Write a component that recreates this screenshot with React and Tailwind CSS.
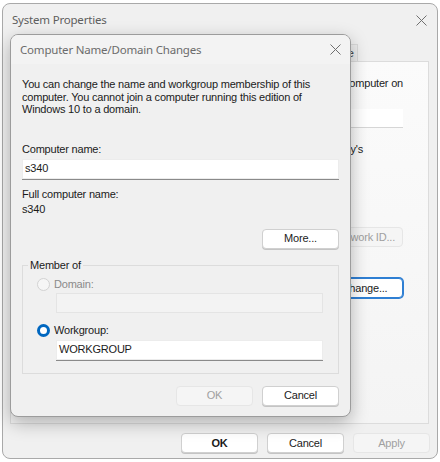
import React from "react";

const ui = { fontFamily: '"Liberation Sans", Arial, sans-serif', letterSpacing: "-0.2px" };
const title = { fontFamily: '"Noto Sans", "Open Sans", sans-serif', letterSpacing: "-0.2px" };

function CloseIcon({ className = "" }) {
  return (
    <svg width="11" height="11" viewBox="0 0 11 11" className={className}>
      <path d="M0.5 0.5 L10.5 10.5 M10.5 0.5 L0.5 10.5" stroke="currentColor" strokeWidth="1" fill="none" />
    </svg>
  );
}

function Button({ children, disabled, focused, className = "" }) {
  let look = "bg-white border-[#d0d0d0] text-[#1b1b1b] shadow-[0_1px_0_#c4c4c4]";
  if (disabled) look = "bg-[#f5f5f5] border-[#e6e6e6] text-[#a0a0a0]";
  if (focused) look = "bg-white border-[#2f7fd3] text-[#1b1b1b] ring-1 ring-[#2f7fd3]";
  return (
    <div className={`flex h-[20px] w-[77px] items-center justify-center rounded-[4px] border text-[11px] ${look} ${className}`}>
      {children}
    </div>
  );
}

function Radio({ checked, disabled }) {
  if (checked) {
    return <div className="h-[13px] w-[13px] rounded-full border-[3.5px] border-[#0067c0] bg-white" />;
  }
  return (
    <div
      className={`h-[13px] w-[13px] rounded-full border ${disabled ? "border-[#d2d2d2] bg-[#f6f6f6]" : "border-[#5a5a5a] bg-white"}`}
    />
  );
}

function TextBox({ value, disabled, className = "" }) {
  if (disabled) {
    return <div className={`h-[20px] border border-[#e4e4e4] bg-[#f3f3f3] ${className}`} />;
  }
  return (
    <div className={`flex h-[21px] items-center border-b border-b-[#8a8a8a] bg-white px-[3px] text-[11px] text-[#1b1b1b] shadow-[inset_0_0_0_1px_#ececec] ${className}`}>
      {value}
    </div>
  );
}

function ChangeDialog() {
  return (
    <div
      className="absolute left-[10px] top-[34px] flex h-[383px] w-[341px] flex-col overflow-hidden rounded-[8px] border border-[#9c9c9c] bg-[#f0f0f0] shadow-[0_6px_18px_rgba(0,0,0,0.28)]"
      style={ui}
    >
      <div className="flex h-[29px] shrink-0 items-center justify-between bg-[#f3f3f3] pl-[9px] pr-[9px]">
        <span className="text-[11.5px] text-[#6b6b6b]" style={title}>
          Computer Name/Domain Changes
        </span>
        <CloseIcon className="text-[#6f6f6f]" />
      </div>

      <div className="flex flex-1 flex-col px-[11px] pt-[14px] text-[11px] text-[#1b1b1b]">
        <p className="leading-[12.5px]">
          You can change the name and workgroup membership of this
          <br />
          computer. You cannot join a computer running this edition of
          <br />
          Windows 10 to a domain.
        </p>

        <div className="mt-[27px] leading-[13px]">Computer name:</div>
        <TextBox value="s340" className="mt-[3px]" />

        <div className="mt-[8px] leading-[13px]">Full computer name:</div>
        <div className="mt-[2px] leading-[13px]">s340</div>

        <div className="mt-[13px] flex justify-end">
          <Button>More...</Button>
        </div>

        <fieldset className="mt-[10px] border border-[#dcdcdc] px-[4px] pb-[12px]">
          <legend className="ml-[1px] px-[2px] leading-[13px]">Member of</legend>
          <div className="pl-[10px] pr-[11px]">
            <div className="mt-[6px] flex items-center gap-[4px] text-[#8a8a8a]">
              <Radio disabled />
              <span className="leading-[13px]">Domain:</span>
            </div>
            <TextBox disabled className="ml-[19px] mt-[2px]" />

            <div className="mt-[11px] flex items-center gap-[4px]">
              <Radio checked />
              <span className="leading-[13px]">Workgroup:</span>
            </div>
            <TextBox value="WORKGROUP" className="ml-[19px] mt-[3px]" />
          </div>
        </fieldset>

        <div className="mt-[12px] flex justify-end gap-[9px]">
          <Button disabled>OK</Button>
          <Button>Cancel</Button>
        </div>
      </div>
    </div>
  );
}

export default function App() {
  const tabs = [
    ["Computer Name", "w-[88px]"],
    ["Hardware", "w-[60px]"],
    ["Advanced", "w-[62px]"],
    ["System Protection", "w-[92px]"],
    ["Remote", "w-[46px]"],
  ];

  return (
    <div className="relative h-[462px] w-[440px] bg-white" style={ui}>
      <div className="absolute left-[2px] top-[3px] flex h-[456px] w-[436px] flex-col rounded-[8px] border border-[#a9a9a9] bg-[#f0f0f0]">
        <div className="flex h-[32px] shrink-0 items-center justify-between pl-[9px] pr-[10px]">
          <span className="text-[11.5px] text-[#5e5e5e]" style={title}>
            System Properties
          </span>
          <CloseIcon className="text-[#707070]" />
        </div>

        <div className="ml-[7px] mt-[8px] flex h-[17px] items-end">
          {tabs.map(([label, w], i) => (
            <div
              key={label}
              className={`flex h-[17px] items-center justify-center border border-b-0 border-[#dadada] text-[11px] text-[#3a3a3a] ${w} ${i === 0 ? "bg-[#f9f9f9]" : "bg-[#ececec]"}`}
            >
              {label}
            </div>
          ))}
        </div>

        <div className="ml-[7px] mr-[8px] flex h-[363px] flex-col border border-[#dcdcdc] bg-gradient-to-b from-[#fbfbfb] to-[#f4f4f4] pr-[25px] text-[11px] text-[#1b1b1b]">
          <div className="mt-[15px] self-end whitespace-nowrap leading-[13px]">
            Windows uses the following information to identify your computer on
          </div>
          <div className="self-end whitespace-nowrap pr-[250px] leading-[13px]">the network.</div>

          <div className="mt-[6px] flex items-center justify-end gap-[8px]">
            <span>Computer description:</span>
            <div className="h-[18px] w-[200px] bg-white shadow-[0_1px_0_#d6d6d6]" />
          </div>

          <div className="mt-[16px] self-end whitespace-nowrap pr-[40px] leading-[13px]">
            For example: "Kitchen Computer" or "Mary's
          </div>
          <div className="self-end whitespace-nowrap pr-[200px] leading-[13px]">Computer".</div>

          <div className="mt-[7px] pl-[20px] leading-[13px]">Full computer name:</div>
          <div className="mt-[7px] pl-[20px] leading-[13px]">Workgroup:</div>

          <div className="mt-[18px] flex items-center justify-end gap-[10px]">
            <span className="whitespace-nowrap">To use a wizard to join a domain or workgroup, click</span>
            <Button disabled>Network ID...</Button>
          </div>

          <div className="mt-[31px] flex items-center justify-end gap-[10px]">
            <span className="whitespace-nowrap">To rename this computer or change its domain or</span>
            <Button focused>Change...</Button>
          </div>
        </div>

        <div className="mr-[7px] mt-[9px] flex justify-end gap-[9px]">
          <Button className="font-semibold">OK</Button>
          <Button>Cancel</Button>
          <Button disabled>Apply</Button>
        </div>
      </div>

      <ChangeDialog />
    </div>
  );
}
